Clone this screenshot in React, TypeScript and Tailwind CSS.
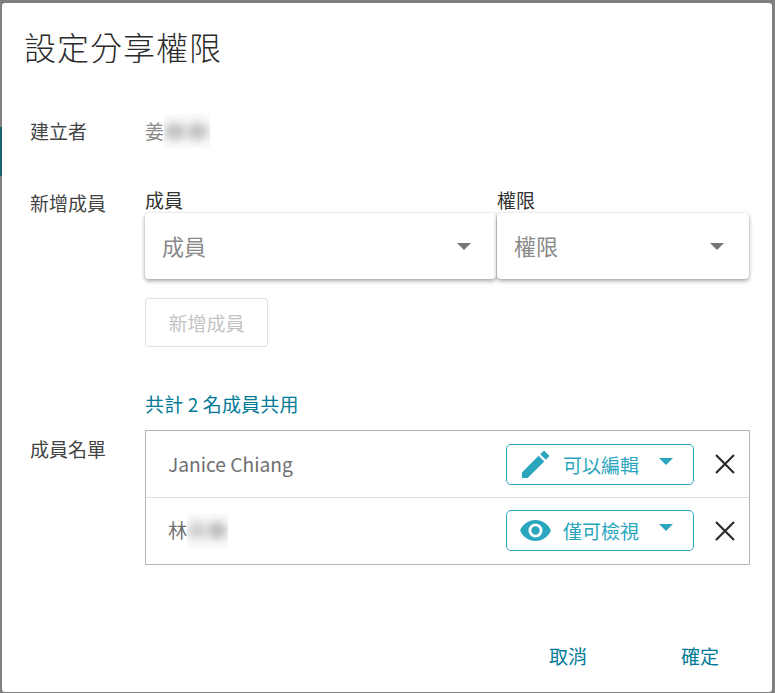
import React from "react";

const font = { fontFamily: '"Noto Sans CJK TC", "Noto Sans", sans-serif' };

function Caret({ className }: { className: string }) {
  return (
    <svg viewBox="0 0 14 7" className={className}>
      <path d="M0 0h14L7 7z" fill="currentColor" />
    </svg>
  );
}

function Blurred({ w, dots }: { w: string; dots: string[] }) {
  return (
    <span className={`inline-flex h-[34px] items-center overflow-hidden bg-[#fafafa] ${w}`}>
      {dots.map((d, i) => (
        <span key={i} className={`h-[17px] rounded-full blur-[4px] ${d}`} />
      ))}
    </span>
  );
}

function SelectBox({ label, className }: { label: string; className: string }) {
  return (
    <div className={className}>
      <div className="text-[19px] leading-[26px] text-[#333]">{label}</div>
      <div className="flex h-[66px] items-center justify-between rounded-[4px] bg-white pl-[17px] pr-[25px] shadow-[0_2px_4px_rgba(0,0,0,0.35),0_0_3px_rgba(0,0,0,0.08)]">
        <span className="-translate-y-[1px] text-[22px] text-[#8a8a8a]">{label}</span>
        <Caret className="h-[7px] w-[14px] text-[#757575]" />
      </div>
    </div>
  );
}

function MemberRow({
  name,
  icon,
  perm,
  divider,
}: {
  name: React.ReactNode;
  icon: React.ReactNode;
  perm: string;
  divider?: boolean;
}) {
  return (
    <div className={`flex items-center pl-[22px] pr-[14px] ${divider ? "h-[67px] border-b border-[#dedede]" : "h-[65px]"}`}>
      <div className="flex-1 text-[19.2px] text-[#6f6f6f]">{name}</div>
      <div className="flex h-[41px] w-[188px] items-center rounded-[5px] border border-[#29a6bd] text-[#29a6bd]">
        <span className="flex w-[56px] justify-center">{icon}</span>
        <span className="text-[19px] leading-none">{perm}</span>
        <Caret className="ml-[20px] h-[7px] w-[14px] -translate-y-[3px]" />
      </div>
      <svg viewBox="0 0 20 20" className="ml-[21px] h-[20px] w-[20px] text-[#2b2b2b]">
        <path d="M1 1l18 18M19 1L1 19" stroke="currentColor" strokeWidth="2.2" fill="none" />
      </svg>
    </div>
  );
}

export default function App() {
  return (
    <div className="relative h-[693px] w-[775px] overflow-hidden bg-[#808080]" style={font}>
      <div className="absolute left-0 top-[127px] h-[49px] w-[2px] bg-[#1b5f6e]" />
      <div className="relative ml-[2px] mt-[3px] h-[689px] w-[770px] rounded-[3px] bg-white pl-[23px]">
        <h1 className="-ml-[1px] pt-[20px] text-[32px] font-light leading-[46px] tracking-[1px] text-[#2b2b2b]">設定分享權限</h1>

        <div className="mt-[45px] flex h-[34px] items-center pl-[5px]">
          <div className="w-[115px] text-[19px] text-[#444]">建立者</div>
          <div className="flex items-center text-[19px] text-[#8a8a8a]">
            姜
            <Blurred w="w-[46px]" dots={["w-[22px] bg-[#c4c4c4]", "w-[22px] bg-[#c4c4c4]"]} />
          </div>
        </div>

        <div className="mt-[39px] flex pl-[5px]">
          <div className="w-[115px] pt-[3px] text-[19px] leading-[26px] text-[#444]">新增成員</div>
          <div>
            <div className="flex gap-[1px]">
              <SelectBox label="成員" className="w-[351px]" />
              <SelectBox label="權限" className="w-[252px]" />
            </div>
            <div className="mt-[19px] flex h-[49px] w-[123px] items-center justify-center rounded-[3px] border border-[#e0e0e0] pt-[2px] text-[19px] text-[#c4c4c4]">
              新增成員
            </div>
            <div className="mt-[44px] text-[19px] leading-[26px] tracking-[0.15px] text-[#007a96]">共計 2 名成員共用</div>
          </div>
        </div>

        <div className="mt-[13px] flex pl-[5px]">
          <div className="w-[115px] pt-[6px] text-[19px] leading-[26px] text-[#444]">成員名單</div>
          <div className="h-[135px] w-[605px] border border-[#b5b5b5]">
            <MemberRow
              divider
              name="Janice Chiang"
              perm="可以編輯"
              icon={
                <svg viewBox="3 3 18 18" className="h-[27px] w-[27px]">
                  <path
                    d="M3 17.25V21h3.75L17.81 9.94l-3.75-3.75L3 17.25zM20.71 7.04a1 1 0 0 0 0-1.41l-2.34-2.34a1 1 0 0 0-1.41 0l-1.83 1.83 3.75 3.75 1.83-1.83z"
                    fill="currentColor"
                  />
                </svg>
              }
            />
            <MemberRow
              name={
                <span className="flex items-center">
                  林
                  <Blurred w="w-[41px]" dots={["w-[20px] bg-[#d0d0d0]", "w-[20px] bg-[#bdbdbd]"]} />
                </span>
              }
              perm="僅可檢視"
              icon={
                <svg viewBox="1 4.5 22 15" className="h-[21px] w-[31px]">
                  <path
                    d="M12 4.5C7 4.5 2.73 7.61 1 12c1.73 4.39 6 7.5 11 7.5s9.27-3.11 11-7.5c-1.73-4.39-6-7.5-11-7.5zM12 17a5 5 0 1 1 0-10 5 5 0 0 1 0 10zm0-8a3 3 0 1 0 0 6 3 3 0 0 0 0-6z"
                    fill="currentColor"
                  />
                </svg>
              }
            />
          </div>
        </div>

        <div className="mt-[78px] flex justify-end gap-[94px] pr-[53px] text-[19px] leading-[26px] text-[#007a96]">
          <span>取消</span>
          <span>確定</span>
        </div>
      </div>
    </div>
  );
}
